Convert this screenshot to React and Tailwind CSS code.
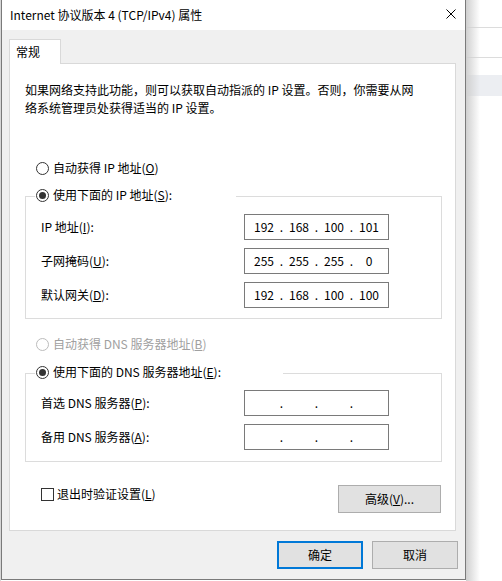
import React from 'react';

const Key = ({ k }) => <span className="underline">{k}</span>;

const Radio = ({ checked, disabled }) => (
  <span className={`w-[13px] h-[13px] rounded-full border bg-white flex items-center justify-center shrink-0 ${disabled ? 'border-[#bcbcbc]' : 'border-[#333333]'}`}>
    {checked && <span className="w-[7px] h-[7px] rounded-full bg-[#333333]" />}
  </span>
);

const IpBox = ({ parts }) => (
  <div className="w-[145px] h-[26px] border border-[#7a7a7a] bg-white flex items-center pl-[5px] text-black">
    {parts.map((p, i) => (
      <React.Fragment key={i}>
        <span className="w-[28px] text-center">{p}</span>
        {i < 3 && <span className="w-[7px] text-center">.</span>}
      </React.Fragment>
    ))}
  </div>
);

const Row = ({ label, parts, first }) => (
  <div className={`flex items-center pl-[15px] ${first ? '' : 'mt-[8px]'}`}>
    <span className="w-[203px]">{label}</span>
    <IpBox parts={parts} />
  </div>
);

export default function App() {
  return (
    <div className="relative w-[502px] h-[581px] bg-white overflow-hidden font-['Noto_Sans_CJK_SC',sans-serif] text-[12px] leading-[18px] text-black">
      {/* desktop behind the dialog */}
      <div className="absolute left-0 top-0 w-[1px] h-full bg-[#d6d6d6]" />
      <div className="absolute left-[466px] top-[27px] w-[36px] h-px bg-[#dcdcdc]" />
      <div className="absolute left-[466px] top-[57px] w-[36px] h-px bg-[#dcdcdc]" />
      <div className="absolute left-[466px] top-[75px] w-[36px] h-[21px] bg-[#eceef2]" />
      <div className="absolute left-[466px] top-0 w-[14px] h-full bg-gradient-to-r from-[#d0d0d0] to-transparent" />

      {/* dialog window */}
      <div className="absolute left-[1px] top-0 w-[465px] h-[580px] border border-t-0 border-[#7a7a7a] bg-[#f0f0f0] flex flex-col">
        <div className="h-[30px] bg-white flex items-center justify-between pl-[8px] pr-[9px] shrink-0">
          <span>Internet 协议版本 4 (TCP/IPv4) 属性</span>
          <svg width="10" height="10" viewBox="0 0 10 10" className="mb-[2px]">
            <path d="M0.5 0.5 L9.5 9.5 M9.5 0.5 L0.5 9.5" stroke="#000" strokeWidth="1" fill="none" />
          </svg>
        </div>

        <div className="pt-[9px] pl-[7px] flex flex-col">
          <div className="relative z-10 w-[52px] h-[25px] bg-white border border-b-0 border-[#d9d9d9] pl-[6px] pt-[3px]">常规</div>
          <div className="-mt-px w-[447px] h-[468px] bg-white border border-[#d9d9d9] flex flex-col pt-[17px]">
            <p className="pl-[15px]">
              如果网络支持此功能，则可以获取自动指派的 IP 设置。否则，你需要从网<br />
              络系统管理员处获得适当的 IP 设置。
            </p>

            <div className="mt-[42px] ml-[26px] flex items-center gap-[4px] h-[18px]">
              <Radio />
              <span>自动获得 IP 地址(<Key k="O" />)</span>
            </div>

            <div className="mt-[19px] ml-[15px] w-[417px] border border-[#dcdcdc] pb-[10px]">
              <div className="-mt-[11px] ml-[9px] pl-[1px] w-[201px] h-[18px] bg-white flex items-center gap-[4px]">
                <Radio checked />
                <span>使用下面的 IP 地址(<Key k="S" />):</span>
              </div>
              <div className="mt-[10px]">
                <Row first label={<>IP 地址(<Key k="I" />):</>} parts={['192', '168', '100', '101']} />
                <Row label={<>子网掩码(<Key k="U" />):</>} parts={['255', '255', '255', '0']} />
                <Row label={<>默认网关(<Key k="D" />):</>} parts={['192', '168', '100', '100']} />
              </div>
            </div>

            <div className="mt-[16px] ml-[26px] flex items-center gap-[4px] h-[18px] text-[#a0a0a0]">
              <Radio disabled />
              <span>自动获得 DNS 服务器地址(<Key k="B" />)</span>
            </div>

            <div className="mt-[20px] ml-[15px] w-[417px] border border-[#dcdcdc] pb-[11px]">
              <div className="-mt-[11px] ml-[9px] pl-[1px] w-[248px] h-[18px] bg-white flex items-center gap-[4px]">
                <Radio checked />
                <span>使用下面的 DNS 服务器地址(<Key k="E" />):</span>
              </div>
              <div className="mt-[9px]">
                <Row first label={<>首选 DNS 服务器(<Key k="P" />):</>} parts={['', '', '', '']} />
                <Row label={<>备用 DNS 服务器(<Key k="A" />):</>} parts={['', '', '', '']} />
              </div>
            </div>

            <div className="mt-[23px] ml-[31px] mr-[14px] flex items-start justify-between">
              <div className="flex items-center gap-[3px] h-[18px]">
                <span className="w-[13px] h-[13px] border border-[#333333] bg-white shrink-0" />
                <span>退出时验证设置(<Key k="L" />)</span>
              </div>
              <button className="w-[103px] h-[28px] bg-[#e1e1e1] border border-[#adadad] flex items-center justify-center">
                高级(<Key k="V" />)...
              </button>
            </div>
          </div>

          <div className="mt-[10px] flex justify-end gap-[9px] pr-[7px]">
            <button className="w-[86px] h-[28px] bg-[#e1e1e1] border-2 border-[#0078d7] flex items-center justify-center">确定</button>
            <button className="w-[86px] h-[28px] bg-[#e1e1e1] border border-[#adadad] flex items-center justify-center">取消</button>
          </div>
        </div>
      </div>
    </div>
  );
}
